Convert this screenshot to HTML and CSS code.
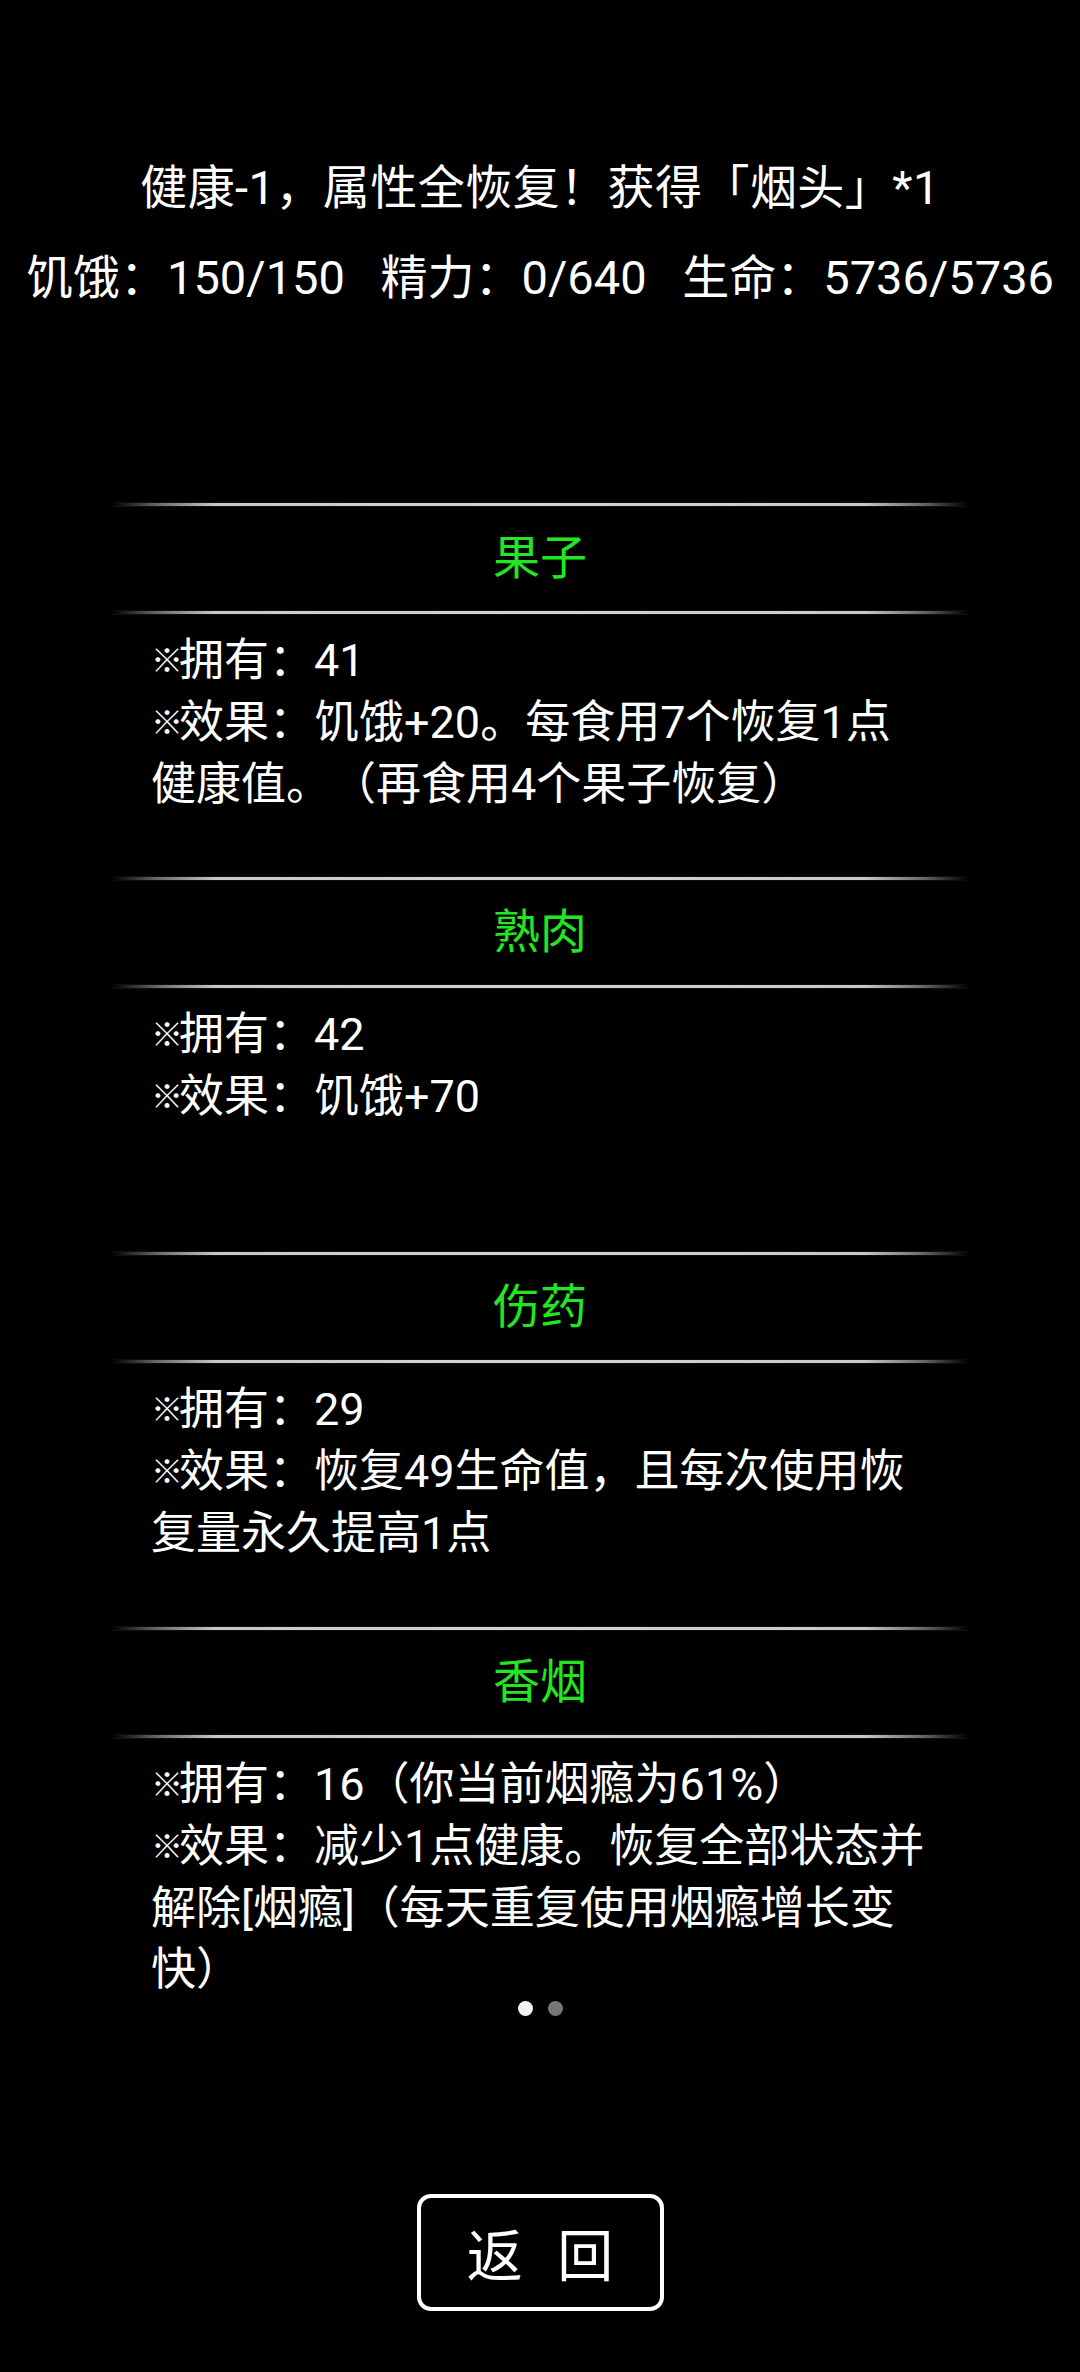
FILE: index.html
```html
<!DOCTYPE html>
<html lang="zh-CN">
<head>
<meta charset="utf-8">
<title>物品</title>
<link rel="stylesheet" href="styles.css">
</head>
<body>
<div class="screen">
  <header class="status">
    <p class="msg">健康-1，属性全恢复！获得「烟头」*1</p>
    <p class="stats">饥饿：150/150 精力：0/640 生命：5736/5736</p>
  </header>

  <section class="pager">
    <div class="item">
      <div class="rule"></div>
      <h2 class="title">果子</h2>
      <div class="rule"></div>
      <div class="desc">
        <p><span class="mark">※</span>拥有：41</p>
        <p><span class="mark">※</span>效果：饥饿+20。每食用7个恢复1点健康值。（再食用4个果子恢复）</p>
      </div>
    </div>
    <div class="item">
      <div class="rule"></div>
      <h2 class="title">熟肉</h2>
      <div class="rule"></div>
      <div class="desc">
        <p><span class="mark">※</span>拥有：42</p>
        <p><span class="mark">※</span>效果：饥饿+70</p>
      </div>
    </div>
    <div class="item">
      <div class="rule"></div>
      <h2 class="title">伤药</h2>
      <div class="rule"></div>
      <div class="desc">
        <p><span class="mark">※</span>拥有：29</p>
        <p><span class="mark">※</span>效果：恢复49生命值，且每次使用恢复量永久提高1点</p>
      </div>
    </div>
    <div class="item">
      <div class="rule"></div>
      <h2 class="title">香烟</h2>
      <div class="rule"></div>
      <div class="desc">
        <p><span class="mark">※</span>拥有：16（你当前烟瘾为61%）</p>
        <p><span class="mark">※</span>效果：减少1点健康。恢复全部状态并解除[烟瘾]（每天重复使用烟瘾增长变快）</p>
      </div>
    </div>
  </section>

  <div class="dots"><span class="dot on"></span><span class="dot"></span></div>

  <div class="actions"><button class="back" type="button">返 回</button></div>
</div>
</body>
</html>
```

FILE: styles.css
```css
* {
  box-sizing: border-box;
  margin: 0;
  padding: 0;
}

html, body {
  background: #000;
}

body {
  margin: 0;
  color: #fff;
  font-family: Roboto, "Noto Sans CJK SC", sans-serif;
  text-spacing-trim: space-all;
}

.screen {
  width: 1080px;
  min-height: 2372px;
  background: #000;
}

.status {
  padding-top: 142.5px;
  text-align: center;
  font-size: 47px;
  line-height: 89px;
  white-space: nowrap;
}

.msg {
  letter-spacing: 0.45px;
}

.stats {
  padding-top: 1px;
  word-spacing: 24px;
}

.pager {
  width: 854px;
  margin: 181px auto 0;
}

.item {
  height: 374.7px;
}

.rule {
  height: 3px;
  background: linear-gradient(to right,
    rgba(200, 200, 200, 0) 0%,
    rgba(200, 200, 200, 0.5) 5%,
    #c8c8c8 12%,
    #d4d4d4 50%,
    #c8c8c8 88%,
    rgba(200, 200, 200, 0.5) 95%,
    rgba(200, 200, 200, 0) 100%);
  box-shadow: 0 0 1.5px rgba(160, 160, 160, 0.45);
}

.title {
  height: 105px;
  line-height: 104px;
  padding-bottom: 1px;
  text-align: center;
  color: #22e622;
  font-size: 47px;
  font-weight: 400;
}

.desc {
  padding: 16px 37px 0 38px;
  font-size: 45px;
  line-height: 61px;
}

.mark {
  font-size: 32px;
  letter-spacing: -4px;
  vertical-align: 4px;
}

.dots {
  display: flex;
  justify-content: center;
  gap: 15px;
}

.dot {
  width: 15px;
  height: 15px;
  border-radius: 50%;
  background: #777;
}

.dot.on {
  background: #f2f2f2;
}

.actions {
  display: flex;
  justify-content: center;
  margin-top: 177.5px;
}

.back {
  width: 247px;
  height: 117px;
  border: 4px solid #fff;
  border-radius: 14px;
  background: #000;
  color: #fff;
  font-family: "Noto Sans CJK SC", sans-serif;
  font-size: 56px;
  word-spacing: 22px;
  line-height: 1;
}
```
